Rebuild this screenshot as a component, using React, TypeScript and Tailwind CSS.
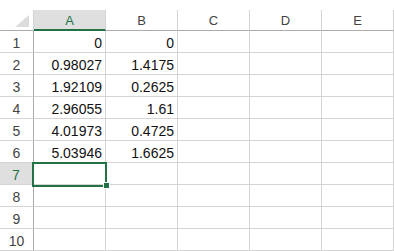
import React from 'react'

const cols = ['A', 'B', 'C', 'D', 'E']
const data: [string, string][] = [
  ['0', '0'],
  ['0.98027', '1.4175'],
  ['1.92109', '0.2625'],
  ['2.96055', '1.61'],
  ['4.01973', '0.4725'],
  ['5.03946', '1.6625'],
]

const font = { fontFamily: '"Liberation Sans", Arial, sans-serif' }

export default function App() {
  return (
    <div className="w-[394px] h-[251px] bg-white overflow-hidden" style={font}>
      <div className="h-[10px]" />
      {/* column headers */}
      <div className="flex h-[21px]">
        <div className="relative w-[34px] border-r border-[#d4d4d4] border-b border-b-[#ababab]">
          <div
            className="absolute left-[15px] top-[5px] w-[14px] h-[12px] bg-[#dcdcdc]"
            style={{ clipPath: 'polygon(100% 0, 100% 100%, 0 100%)' }}
          />
        </div>
        {cols.map((c) =>
          c === 'A' ? (
            <div
              key={c}
              className="w-[72px] bg-[#dfdfdf] border-r border-[#d4d4d4] border-b-2 border-b-[#217346] text-center text-[13px] leading-[13px] pt-[4px] text-[#217346]"
            >
              {c}
            </div>
          ) : (
            <div
              key={c}
              className="w-[72px] border-r border-[#d4d4d4] border-b border-b-[#ababab] text-center text-[13px] leading-[13px] pt-[4px] text-[#444]"
            >
              {c}
            </div>
          )
        )}
      </div>
      {/* rows */}
      {Array.from({ length: 10 }, (_, i) => {
        const n = i + 1
        const row = data[i]
        const selected = n === 7
        return (
          <div key={n} className="flex h-[22px]">
            <div
              className={`w-[34px] border-b border-[#d4d4d4] text-center text-[14px] leading-[14px] pt-[5px] ${
                selected
                  ? 'bg-[#dfdfdf] text-[#217346] border-r-2 border-r-[#217346]'
                  : 'text-[#444] border-r border-r-[#ababab]'
              }`}
            >
              {n}
            </div>
            {cols.map((c, j) => (
              <div
                key={c}
                className="relative w-[72px] border-r border-b border-[#d4d4d4] text-right pr-[3px] text-[14px] leading-[14px] pt-[5px] text-[#111]"
              >
                {row && j < 2 ? row[j] : ''}
                {selected && j === 0 && (
                  <>
                    <div className="absolute z-10 left-[-2px] top-[-1px] w-[75px] h-[25px] border-2 border-[#217346]" />
                    <div className="absolute z-20 left-[69px] top-[19px] w-[7px] h-[7px] bg-[#217346] border border-white" />
                  </>
                )}
              </div>
            ))}
          </div>
        )
      })}
    </div>
  )
}
